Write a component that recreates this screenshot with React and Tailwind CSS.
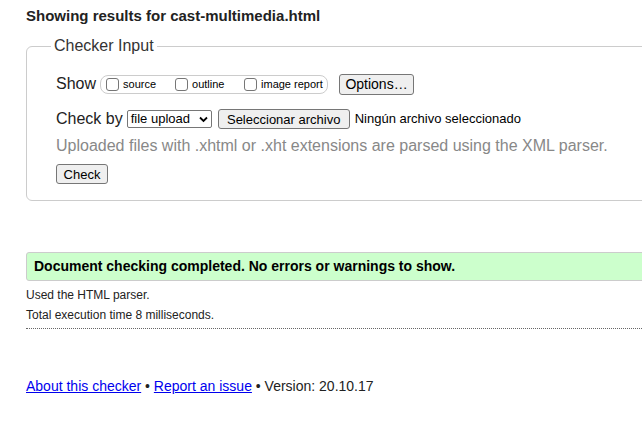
import React from 'react';

const Box = () => (
    <span className="inline-block w-[13px] h-[13px] border border-[#767676] rounded-[3px] bg-white mr-[4px] shrink-0" />
);

const Btn = ({ children, className = '' }) => (
    <span className={`inline-flex items-center justify-center bg-[#efefef] border border-[#767676] rounded-[3px] text-[13px] text-black leading-none ${className}`}>
        {children}
    </span>
);

export default function App() {
    return (
        <div className="w-[642px] h-[424px] overflow-hidden bg-white text-[#222] font-['Liberation_Sans',Arial,sans-serif]">
            <div className="pl-[26px] pt-[7px]">
                <h2 className="text-[15px] font-bold leading-[18px] text-[#222]">Showing results for cast-multimedia.html</h2>

                {/* Checker Input fieldset */}
                <div className="relative mt-[21px] w-[660px] h-[155px] border border-[#cccccc] rounded-[6px]">
                    <div className="absolute -top-[10px] left-[24px] bg-white px-[3px] text-[16px] leading-[18px] text-[#333]">Checker Input</div>

                    <div className="pl-[29px] pt-[26px]">
                        <div className="flex items-center h-[22px]">
                            <span className="text-[16px] mr-[4px]">Show</span>
                            <span className="flex items-center h-[19px] w-[228px] border border-[#cccccc] rounded-[8px] pl-[5px] text-[11px] text-black">
                                <Box /><span className="w-[52px]">source</span>
                                <Box /><span className="w-[52px]">outline</span>
                                <Box /><span>image report</span>
                            </span>
                            <Btn className="ml-[11px] w-[75px] h-[21px] text-[14px]">Options…</Btn>
                        </div>

                        <div className="flex items-center h-[22px] mt-[13px]">
                            <span className="text-[16px] mr-[4px]">Check by</span>
                            <span className="flex items-center justify-between w-[85px] h-[18px] border border-[#767676] rounded-[2px] pl-[3px] pr-[3px] text-[13px] text-black">
                                file upload
                                <svg width="9" height="7" viewBox="0 0 9 7"><path d="M1 1.5 L4.5 5 L8 1.5" stroke="#000" strokeWidth="1.8" fill="none" /></svg>
                            </span>
                            <Btn className="ml-[6px] w-[132px] h-[20px]">Seleccionar archivo</Btn>
                            <span className="ml-[5px] text-[13px] text-black">Ningún archivo seleccionado</span>
                        </div>

                        <p className="mt-[7px] text-[16px] leading-[18px] text-[#888888]">Uploaded files with .xhtml or .xht extensions are parsed using the XML parser.</p>

                        <Btn className="mt-[9px] w-[52px] h-[20px]">Check</Btn>
                    </div>
                </div>

                {/* result */}
                <div className="mt-[51px] w-[660px] h-[29px] flex items-center pl-[7px] bg-[#ccffcc] border border-[#cccccc] rounded-[3px]">
                    <span className="text-[14px] font-bold text-black">Document checking completed. No errors or warnings to show.</span>
                </div>

                <p className="mt-[7px] text-[12px] leading-[14px] text-[#222]">Used the HTML parser.</p>
                <p className="mt-[6px] text-[12px] leading-[14px] text-[#222]">Total execution time 8 milliseconds.</p>
                <div className="mt-[6px] w-[640px] border-t border-dotted border-[#666]" />

                <p className="mt-[49px] text-[14px] leading-[16px] text-[#222]">
                    <a href="#" className="text-[#0000ee] underline">About this checker</a>
                    {' • '}
                    <a href="#" className="text-[#0000ee] underline">Report an issue</a>
                    {' • Version: 20.10.17'}
                </p>
            </div>
        </div>
    );
}
